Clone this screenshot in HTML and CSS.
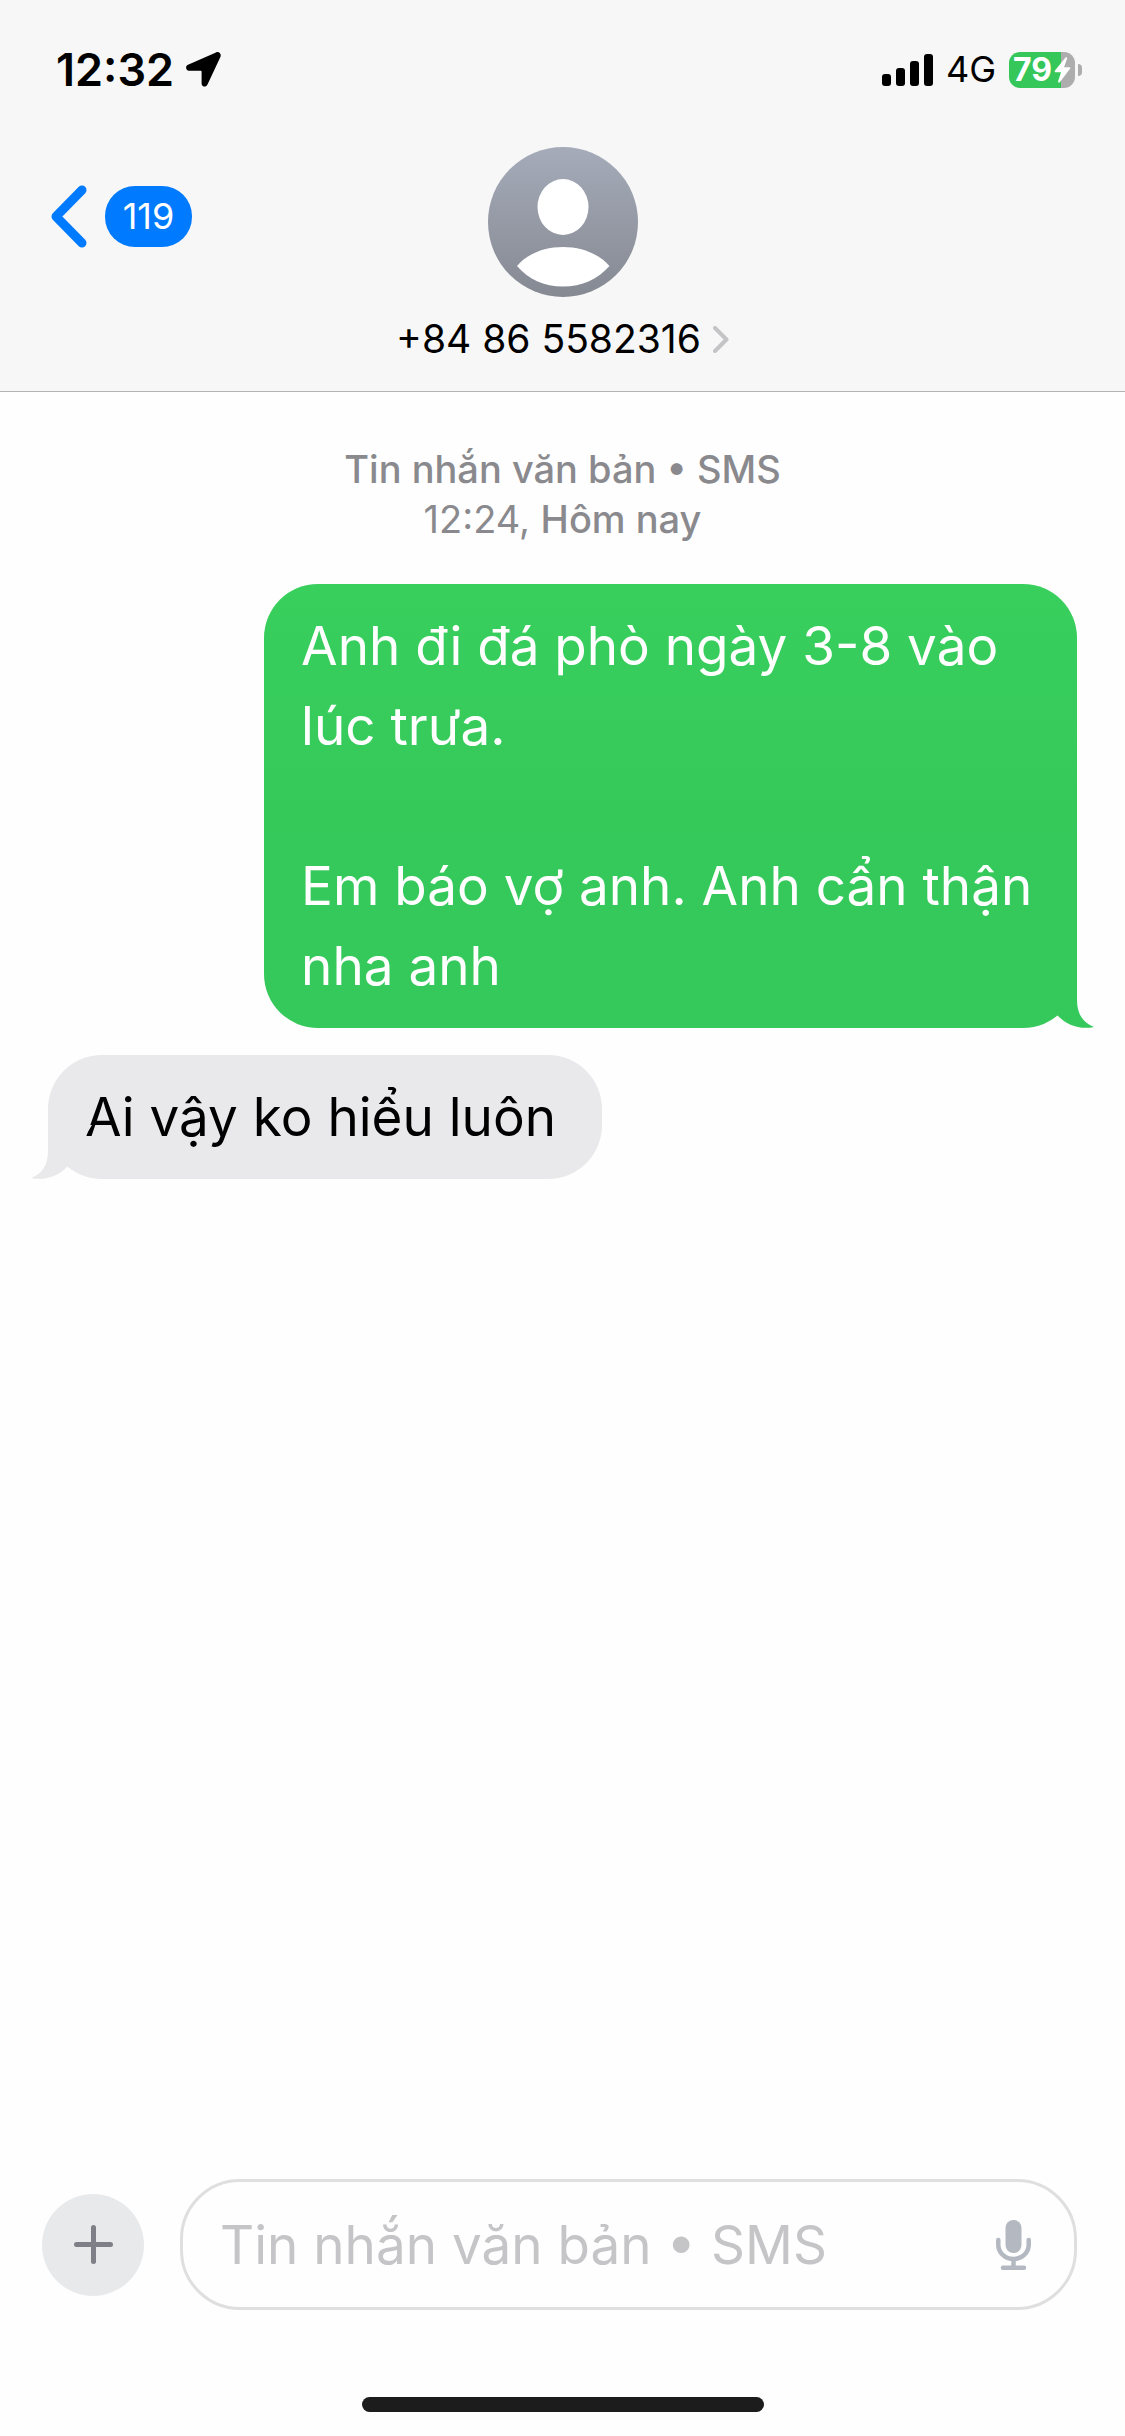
FILE: index.html
```html
<!DOCTYPE html>
<html lang="vi">
<head>
  <meta charset="utf-8">
  <meta name="viewport" content="width=device-width, initial-scale=1">
  <title>+84 86 5582316</title>
  <link rel="stylesheet" href="styles.css">
</head>
<body>
  <div class="screen">
    <header class="header">
      <div class="status">
        <div class="status-group status-left">
          <time class="clock">12:32</time>
          <svg class="icon-location" viewBox="0 0 35 35" aria-hidden="true">
            <path d="M30 .4 2 12.800C-1 14.200-.3 18.800 3 18.800H14.800Q15.600 18.800 15.600 19.600V31.500C15.600 35 20 35.800 21.500 32.600L34.400 5C35.700 2 33 -.9 30 .4Z"/>
          </svg>
        </div>
        <div class="status-group status-right">
          <svg class="icon-signal" viewBox="0 0 51 32" aria-hidden="true">
            <rect x="0" y="20" width="9" height="12" rx="3"/>
            <rect x="14" y="14" width="9" height="18" rx="3"/>
            <rect x="28" y="7" width="9" height="25" rx="3"/>
            <rect x="42" y="0" width="9" height="32" rx="3"/>
          </svg>
          <span class="network">4G</span>
          <div class="battery">
            <div class="battery-body">
              <span class="battery-level">79</span>
              <svg class="icon-bolt" viewBox="0 0 17 26" aria-hidden="true">
                <path d="M11.500 .6 1 13.600C.3 14.500 .8 15.200 1.800 15.200H7L4.200 24C3.700 25.600 5 26 6 24.900L16 11.800C16.700 10.900 16.300 10.200 15.300 10.200H10L13 2C13.600 .3 12.500-.4 11.500 .6Z"/>
              </svg>
            </div>
            <div class="battery-cap"></div>
          </div>
        </div>
      </div>
      <div class="nav">
        <button class="back" type="button" aria-label="119">
          <svg class="icon-back" viewBox="0 0 37 63" aria-hidden="true"><path d="M32 5 6 31.500 32 58"/></svg>
          <span class="badge">119</span>
        </button>
        <button class="contact" type="button">
          <svg class="avatar" viewBox="0 0 150 150" aria-hidden="true">
            <defs>
              <linearGradient id="avatar-fill" x1="0" y1="0" x2="0" y2="1">
                <stop offset="0" stop-color="#a5abb9"/>
                <stop offset="1" stop-color="#858992"/>
              </linearGradient>
            </defs>
            <circle cx="75" cy="75" r="75" fill="url(#avatar-fill)"/>
            <ellipse cx="75" cy="60" rx="25.500" ry="28" fill="#fff"/>
            <path d="M29 119C39 107 56 100 75 100S111 107 121.500 119C110 132 94 139.500 75 139.500S40 132 29 119Z" fill="#fff"/>
          </svg>
          <span class="contact-name">
            <span>+84 86 5582316</span>
            <svg class="icon-more" viewBox="0 0 16 27" aria-hidden="true"><path d="M2 2 13.500 13.500 2 25"/></svg>
          </span>
        </button>
      </div>
    </header>

    <main class="thread">
      <p class="stamp"><span>Tin nhắn văn bản • SMS</span><br>12:24, <span>Hôm nay</span></p>
      <div class="bubble sent">Anh đi đá phò ngày 3-8 vào lúc trưa.

Em báo vợ anh. Anh cẩn thận nha anh<svg class="tail" viewBox="0 0 71 54" aria-hidden="true"><path d="M54 0V26C54 40 60 49 71 53C57 56 44 51 35 42L10 0Z"/></svg></div>
      <div class="bubble received">Ai vậy ko hiểu luôn<svg class="tail" viewBox="0 0 71 54" aria-hidden="true"><path d="M54 0V26C54 40 60 49 71 53C57 56 44 51 35 42L10 0Z"/></svg></div>
    </main>

    <form class="composer">
      <button class="add" type="button" aria-label="Thêm">
        <svg class="icon-plus" viewBox="0 0 39 39" aria-hidden="true"><path d="M19.500 2.500V36.500M2.500 19.500H36.500"/></svg>
      </button>
      <div class="field">
        <input class="field-input" type="text" aria-label="Tin nhắn văn bản • SMS" placeholder="Tin nhắn văn bản • SMS">
        <button class="mic" type="button" aria-label="Đọc chính tả">
          <svg class="icon-mic" viewBox="0 0 35 50" aria-hidden="true">
            <rect class="mic-head" x="9.500" y="0" width="16" height="33" rx="8"/>
            <path d="M2.300 20V25A15.200 14 0 0 0 32.700 25V20M17.500 39V47M7 47.800H28"/>
          </svg>
        </button>
      </div>
    </form>
    <div class="home-bar"></div>
  </div>
</body>
</html>
```
FILE: styles.css
```css
* {
  box-sizing: border-box;
}

body {
  margin: 0;
  background: #fefefe;
  color: #000;
  font-family: Inter, "Liberation Sans", sans-serif;
}

button {
  padding: 0;
  border: 0;
  background: none;
  color: inherit;
  font: inherit;
  cursor: pointer;
}

svg {
  display: block;
  flex: none;
}

.screen {
  display: flex;
  flex-direction: column;
  min-height: 100vh;
}

/* Header */

.header {
  padding: 40px 43px 28px;
  border-bottom: 1px solid #b3b3b3;
  background: #f7f7f7;
}

.status {
  display: flex;
  align-items: center;
  justify-content: space-between;
  height: 59px;
}

.status-group {
  display: flex;
  align-items: center;
}

.status-left {
  gap: 12px;
  padding-left: 13px;
}

.status-right {
  gap: 13px;
}

.clock {
  font-size: 45px;
  font-weight: 600;
  line-height: 59px;
}

.icon-location {
  width: 35px;
  height: 35px;
}

.icon-signal {
  width: 51px;
  height: 32px;
}

.network {
  font-size: 36px;
  line-height: 59px;
}

.battery {
  display: flex;
  align-items: center;
  gap: 3px;
}

.battery-body {
  display: flex;
  align-items: center;
  justify-content: center;
  gap: 2px;
  width: 66px;
  height: 36px;
  border-radius: 11px;
  background: linear-gradient(90deg, #35c759 79%, #adadad 79%);
  color: #fff;
}

.battery-level {
  font-size: 32px;
  font-weight: 700;
  line-height: 36px;
}

.icon-bolt {
  width: 17px;
  height: 26px;
  fill: #fff;
}

.battery-cap {
  width: 4px;
  height: 12px;
  border-radius: 0 4px 4px 0;
  background: #adadad;
}

.nav {
  display: grid;
  grid-template-columns: 1fr auto 1fr;
  align-items: start;
  padding-top: 48px;
}

.back {
  display: flex;
  align-items: center;
  justify-self: start;
  gap: 18px;
  margin: 38px 0 0 7px;
}

.icon-back {
  width: 37px;
  height: 63px;
  fill: none;
  stroke: #007aff;
  stroke-width: 9;
  stroke-linecap: round;
  stroke-linejoin: round;
}

.badge {
  min-width: 87px;
  border-radius: 30px;
  background: #007aff;
  color: #fff;
  font-size: 36px;
  line-height: 61px;
  text-align: center;
}

.contact {
  display: flex;
  flex-direction: column;
  align-items: center;
  gap: 18px;
}

.avatar {
  width: 150px;
  height: 150px;
}

.contact-name {
  display: flex;
  align-items: center;
  gap: 12px;
  font-size: 39px;
  line-height: 48px;
}

.icon-more {
  width: 16px;
  height: 27px;
  fill: none;
  stroke: #c4c4c6;
  stroke-width: 4;
  stroke-linecap: round;
  stroke-linejoin: round;
}

/* Conversation */

.thread {
  display: flex;
  flex: 1;
  flex-direction: column;
  padding: 52px 48px;
}

.stamp {
  margin: 0 0 40px;
  color: #8a8a8e;
  font-size: 38px;
  line-height: 50px;
  text-align: center;
}

.stamp span {
  font-weight: 500;
}

.bubble {
  position: relative;
  max-width: 79%;
  padding: 22px 38px 22px 37px;
  border-radius: 54px;
  font-size: 53px;
  line-height: 80px;
  white-space: pre-wrap;
}

.sent {
  align-self: flex-end;
  background: linear-gradient(#38cf5d, #35c85a 60%);
  color: #fff;
  fill: #35c85a;
}

.received {
  align-self: flex-start;
  margin-top: 27px;
  padding-right: 46px;
  background: #e9e9eb;
  fill: #e9e9eb;
}

.tail {
  position: absolute;
  right: -17px;
  bottom: 0;
  width: 71px;
  height: 54px;
}

.received .tail {
  right: auto;
  left: -17px;
  transform: scaleX(-1);
}

/* Composer */

.composer {
  display: flex;
  align-items: center;
  gap: 36px;
  padding: 0 48px 0 42px;
}

.add {
  display: flex;
  flex: none;
  align-items: center;
  justify-content: center;
  width: 102px;
  height: 102px;
  border-radius: 50%;
  background: #e8e9eb;
}

.icon-plus {
  width: 39px;
  height: 39px;
  fill: none;
  stroke: #7f7f87;
  stroke-width: 5;
  stroke-linecap: round;
}

.field {
  display: flex;
  flex: 1;
  align-items: center;
  min-width: 0;
  height: 131px;
  padding: 0 43px 0 37px;
  border: 3px solid #dfdfdf;
  border-radius: 60px;
}

.field-input {
  flex: 1;
  min-width: 0;
  height: 80px;
  padding: 0;
  border: 0;
  outline: 0;
  background: none;
  color: #000;
  font: inherit;
  font-size: 53px;
}

.field-input::placeholder {
  color: #c5c5c7;
  opacity: 1;
}

.icon-mic {
  width: 35px;
  height: 50px;
  fill: none;
  stroke: #b3b8c1;
  stroke-width: 4.500;
  stroke-linecap: round;
}

.mic-head {
  fill: #b3b8c1;
  stroke: none;
}

.home-bar {
  align-self: center;
  width: 402px;
  height: 15px;
  margin: 87px 0 24px;
  border-radius: 8px;
  background: #1c1c1c;
}
```
